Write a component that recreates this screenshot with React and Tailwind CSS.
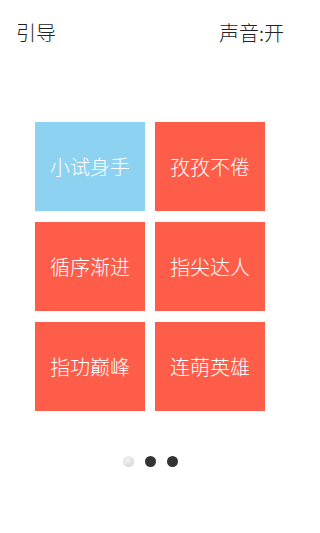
const levels = [
  { name: "小试身手", color: "bg-[#8ed2f1]" },
  { name: "孜孜不倦", color: "bg-[#fe5d4a]" },
  { name: "循序渐进", color: "bg-[#fe5d4a]" },
  { name: "指尖达人", color: "bg-[#fe5d4a]" },
  { name: "指功巅峰", color: "bg-[#fe5d4a]" },
  { name: "连萌英雄", color: "bg-[#fe5d4a]" },
]

export default function App() {
  return (
    <div
      className="w-[300px] h-[533px] bg-white flex flex-col text-[#222]"
      style={{ fontFamily: '"Noto Sans CJK SC", "Noto Sans", sans-serif' }}
    >
      <header className="flex justify-between items-center h-[66px] pl-[16px] pr-[16px] text-[20px] font-light">
        <span>引导</span>
        <span>声音:开</span>
      </header>

      <div className="grid grid-cols-[110px_110px] gap-x-[10px] gap-y-[11px] justify-center mt-[56px]">
        {levels.map((l) => (
          <div
            key={l.name}
            className={`${l.color} h-[89px] flex items-center justify-center text-white text-[20px] font-light`}
          >
            {l.name}
          </div>
        ))}
      </div>

      <div className="flex justify-center gap-[11px] mt-[45px]">
        <span className="w-[11px] h-[11px] rounded-full bg-[radial-gradient(circle_at_40%_35%,#f4f4f4,#cfcfcf)]" />
        <span className="w-[11px] h-[11px] rounded-full bg-[#333]" />
        <span className="w-[11px] h-[11px] rounded-full bg-[#333]" />
      </div>
    </div>
  )
}
